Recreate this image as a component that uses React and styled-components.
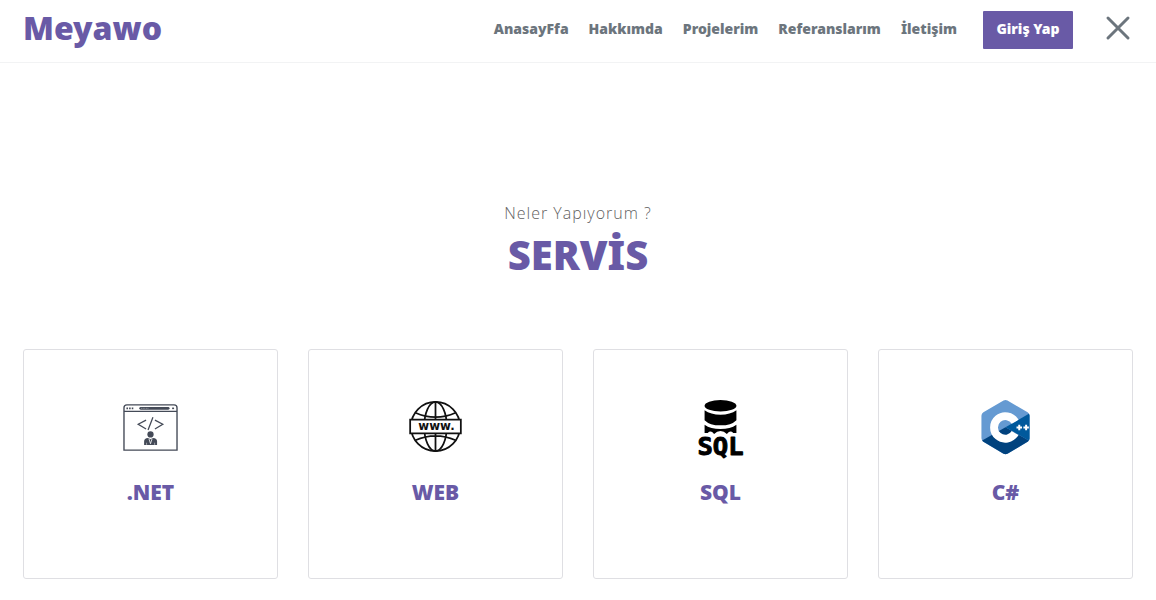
import React from "react";
import styled, { createGlobalStyle } from "styled-components";

const purple = "#695aa6";
const gray = "#6c757d";
const display = `"Noto Sans", "Open Sans", sans-serif`;

const GlobalStyle = createGlobalStyle`
  *, *::before, *::after { box-sizing: border-box; }
  body {
    margin: 0;
    background: #fff;
    font-family: "Open Sans", sans-serif;
  }
`;

const Header = styled.header`
  border-bottom: 1px solid #f2f3f4;
`;

const Container = styled.div`
  width: 100%;
  max-width: 1140px;
  margin: 0 auto;
  padding: 0 15px;
`;

const Bar = styled(Container)`
  display: flex;
  align-items: center;
  justify-content: space-between;
  min-height: 62px;
  padding-bottom: 6px;
`;

const Brand = styled.a`
  color: ${purple};
  font: 900 32px/40px ${display};
  text-decoration: none;
`;

const Nav = styled.nav`
  display: flex;
  align-items: center;
  padding: 4px 2px 0 0;
`;

const NavList = styled.ul`
  display: flex;
  gap: 20px;
  margin: 0;
  padding: 0 0 4px;
  list-style: none;
`;

const NavLink = styled.a`
  color: ${gray};
  font: 900 14px/20px ${display};
  text-decoration: none;
`;

const LoginButton = styled.button`
  min-width: 90px;
  height: 38px;
  margin: 0 32px 0 26px;
  padding: 0 12px 2px;
  border: 0;
  border-radius: 1px;
  background: ${purple};
  color: #fff;
  font: 900 14px/20px ${display};
`;

const CloseButton = styled.button`
  display: flex;
  padding: 0 0 4px;
  border: 0;
  background: none;
  color: ${gray};
`;

const Section = styled.section`
  padding: 139px 0 20px;
  text-align: center;
`;

const Subtitle = styled.p`
  margin: 0;
  color: #5f5f5f;
  font-size: 16px;
  font-weight: 300;
  line-height: 22px;
  letter-spacing: 1px;
`;

const Title = styled.h2`
  margin: 11px 0 74px;
  color: ${purple};
  font: 900 40px/40px ${display};
`;

const Cards = styled.div`
  display: grid;
  grid-template-columns: repeat(4, 1fr);
  gap: 30px;
`;

const Card = styled.article`
  display: flex;
  flex-direction: column;
  align-items: center;
  min-height: 230px;
  padding: 50px 20px;
  border: 1px solid #dfdfe3;
  border-radius: 3px;
`;

const CardTitle = styled.h3`
  margin: 22px 0 0;
  color: ${purple};
  font: 900 21px/30px ${display};
`;

const Icon = styled.svg`
  display: block;
  width: 55px;
  height: 55px;
  overflow: visible;
`;

const GlobeText = styled.text`
  font: 700 12px "DejaVu Sans", sans-serif;
  text-anchor: middle;
`;

const DatabaseText = styled.text`
  font: 700 26px "DejaVu Sans Mono", monospace;
  text-anchor: middle;
  stroke: #000;
  stroke-width: 1px;
  stroke-linejoin: round;
`;

const BrowserIcon = () => (
  <Icon viewBox="0 0 56 56" fill="none" stroke="#444a57" aria-hidden="true">
    <path d="M1 51V8Q1 5 4 5H52Q55 5 55 8V51Z" strokeWidth="1.4" />
    <path d="M1 11.6H55" strokeWidth="1.1" />
    <path d="M3.5 8.5H11" strokeWidth="1.8" strokeDasharray="1.6 1.1" />
    <path d="M18 8.5H46" strokeWidth="2.8" strokeLinecap="round" />
    <path d="M18.5 8.5H26" stroke="#8d929b" strokeWidth="1" strokeDasharray="1 .6" />
    <path d="M50 8.5H52" strokeWidth="1.6" />
    <path d="M23.5 20.5L15.5 24.7L23.5 29.5M30.5 17.5L25.5 30.5M32.5 20.5L40.5 24.7L32.5 29.5" strokeWidth="1.3" />
    <circle cx="28" cy="35" r="3.2" fill="#444a57" stroke="none" />
    <path d="M21.5 45.7V42Q21.5 39 25.5 38.6L28 40L30.5 38.6Q34.7 39 34.7 42V45.7Z" fill="#444a57" stroke="none" />
    <path d="M26.4 39.4L28 44.5L29.6 39.4" stroke="#fff" strokeWidth=".8" />
    <path d="M24 43.5V45.7M32.2 43.5V45.7" stroke="#fff" strokeWidth=".5" />
  </Icon>
);

const WebIcon = () => (
  <Icon viewBox="0 0 56 56" fill="none" stroke="#111" strokeWidth="1.8" aria-hidden="true">
    <circle cx="28" cy="27" r="25" />
    <ellipse cx="28" cy="27" rx="11.5" ry="25" />
    <path d="M28 2V52M7.5 13Q28 22 48.5 13M7.5 41Q28 32 48.5 41" />
    <path d="M2.2 20H53.8V34H2.2Z" fill="#fff" />
    <GlobeText x="29" y="31" fill="#111" stroke="none">www.</GlobeText>
  </Icon>
);

const SqlIcon = () => (
  <Icon viewBox="0 0 56 56" fill="#000" aria-hidden="true">
    <ellipse cx="28" cy="5.8" rx="16.2" ry="5.8" />
    <path d="M11.8 10.5Q18 15 28 15T44.2 10.5V20.5Q39 25.8 28 25.8T11.8 20.5Z" />
    <path d="M11.8 25.2Q18 29.6 28 29.6T44.2 25.2V33.5H41Q39 31.5 36.5 32.5L34.5 34.5Q31.5 31.5 28 31.5T21.5 34.5L19.5 32.5Q17 31.5 15 33.5H11.8Z" />
    <DatabaseText x="28" y="55.5">SQL</DatabaseText>
  </Icon>
);

const CppIcon = () => (
  <Icon viewBox="0 0 56 56" aria-hidden="true">
    <path d="M28 0Q29 0 30 .6L50.5 12.5Q52.5 14 52.5 16V39Q52.5 41 50.5 42.5L30 54.8Q28 55.8 26 54.8L5.5 42.5Q3.5 41 3.5 39V16Q3.5 14 5.5 12.5L26 .6Q27 0 28 0Z" fill="#659ad2" />
    <path d="M4.2 41.2L28 27.8L51.8 41.2Q51.3 42 50.5 42.5L30 54.8Q28 55.8 26 54.8L5.5 42.5Q4.7 42 4.2 41.2Z" fill="#00427e" />
    <path d="M28 27.8L51.8 14Q52.5 14.8 52.5 16V39Q52.5 40.2 51.8 41.2Z" fill="#00599c" />
    <path d="M37.8 22.2A11.5 11.5 0 1 0 37.8 33.6" fill="none" stroke="#fff" strokeWidth="8" />
    <path d="M39.2 28H44.8M42 25.2V30.8M46.2 28H51.8M49 25.2V30.8" fill="none" stroke="#fff" strokeWidth="2" />
  </Icon>
);

const links = [
  ["AnasayFfa", "#anasayfa"],
  ["Hakkımda", "#hakkimda"],
  ["Projelerim", "#projelerim"],
  ["Referanslarım", "#referanslarim"],
  ["İletişim", "#iletisim"],
];

const services = [
  [".NET", BrowserIcon],
  ["WEB", WebIcon],
  ["SQL", SqlIcon],
  ["C#", CppIcon],
];

export default function App() {
  return (
    <>
      <GlobalStyle />
      <Header>
        <Bar>
          <Brand href="#">Meyawo</Brand>
          <Nav>
            <NavList>
              {links.map(([label, href]) => (
                <li key={href}>
                  <NavLink href={href}>{label}</NavLink>
                </li>
              ))}
            </NavList>
            <LoginButton type="button">Giriş Yap</LoginButton>
            <CloseButton type="button" aria-label="Menüyü kapat">
              <svg width="26" height="26" viewBox="0 0 26 26" fill="none" stroke="currentColor" strokeWidth="3" strokeLinecap="round" aria-hidden="true">
                <path d="M3 3L23 23M23 3L3 23" />
              </svg>
            </CloseButton>
          </Nav>
        </Bar>
      </Header>
      <main>
        <Section>
          <Container>
            <Subtitle>Neler Yapıyorum ?</Subtitle>
            <Title>SERVİS</Title>
            <Cards>
              {services.map(([name, Picture]) => (
                <Card key={name}>
                  <Picture />
                  <CardTitle>{name}</CardTitle>
                </Card>
              ))}
            </Cards>
          </Container>
        </Section>
      </main>
    </>
  );
}
